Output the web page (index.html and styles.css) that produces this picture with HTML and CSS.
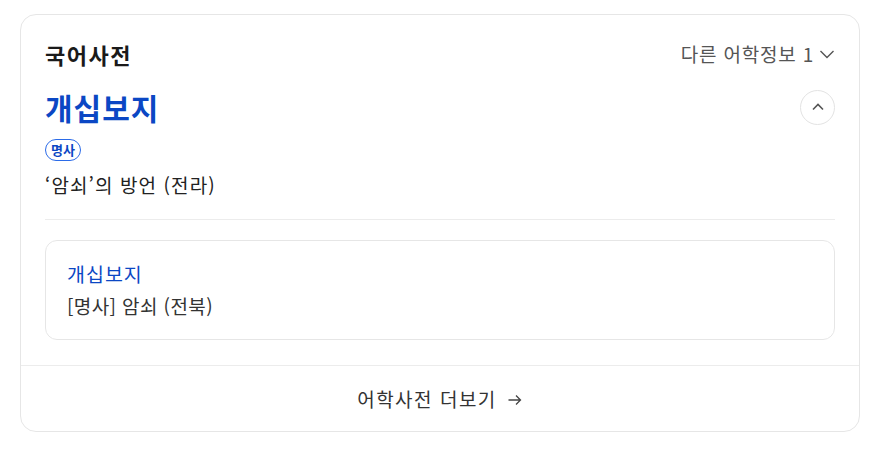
FILE: index.html
```html
<!DOCTYPE html>
<html lang="ko">
<head>
<meta charset="utf-8">
<link rel="stylesheet" href="styles.css">
</head>
<body>
<div class="card">
  <div class="body">
    <div class="head">
      <h2 class="title">국어사전</h2>
      <div class="other">다른 어학정보 1
        <svg class="chev" width="16" height="16" viewBox="0 0 16 16"><path d="M1.5 5l6.5 6.5 6.5-6.5" fill="none" stroke="#555" stroke-width="1.4"/></svg>
      </div>
    </div>
    <div class="wordrow">
      <h1 class="word">개십보지</h1>
      <button class="up"><svg width="14" height="14" viewBox="0 0 14 14"><path d="M2 9.5l5-5 5 5" fill="none" stroke="#555" stroke-width="1.6"/></svg></button>
    </div>
    <div class="pos"><span class="badge">명사</span></div>
    <p class="def">‘암쇠’의 방언 (전라)</p>
    <hr class="sep">
    <div class="sub">
      <div class="subword">개십보지</div>
      <div class="subdef">[명사] 암쇠 (전북)</div>
    </div>
  </div>
  <div class="foot">어학사전 더보기
    <svg class="arrow" width="16" height="16" viewBox="0 0 16 16"><path d="M1.5 8h12M9 3.5L13.5 8 9 12.5" fill="none" stroke="#444" stroke-width="1.3"/></svg>
  </div>
</div>
</body>
</html>
```
FILE: styles.css
```css
* { box-sizing: border-box; }
body {
  margin: 0;
  padding: 14px 32px 0 20px;
  background: #fff;
  font-family: "Noto Sans CJK KR", "Noto Sans", sans-serif;
  color: #222;
}
.card {
  width: 840px;
  border: 1px solid #e6e6e6;
  border-radius: 16px;
  overflow: hidden;
}
.body { padding: 0 24px 25px 24px; }
.head {
  display: flex;
  justify-content: space-between;
  align-items: center;
  height: 76px;
  padding-top: 1px;
}
.title {
  margin: 0;
  font-size: 22px;
  font-weight: 700;
  color: #1a1a1a;
  letter-spacing: 1.5px;
}
.other {
  display: flex;
  align-items: center;
  gap: 5px;
  font-size: 19px;
  letter-spacing: 0.8px;
  color: #555;
}
.chev { margin-top: 1px; }
.wordrow {
  display: flex;
  justify-content: space-between;
  align-items: center;
  margin-top: -4px;
}
.word {
  margin: 0;
  font-size: 30px;
  font-weight: 700;
  color: #0b47c4;
  line-height: 40px;
  letter-spacing: 1px;
}
.up {
  width: 35px;
  height: 35px;
  border-radius: 50%;
  border: 1px solid #e3e3e3;
  background: #fff;
  display: flex;
  align-items: center;
  justify-content: center;
  padding: 0;
}
.pos {
  display: flex;
  margin-top: 12px;
}
.badge {
  display: block;
  height: 22px;
  border: 1px solid #2b6be8;
  border-radius: 11px;
  color: #0b47c4;
  font-size: 13px;
  font-weight: 700;
  line-height: 20px;
  padding: 0 5px;
}
.def {
  margin: 10px 0 0;
  font-size: 19px;
  letter-spacing: 1.1px;
  line-height: 28px;
  color: #222;
}
.sep {
  border: 0;
  border-top: 1px solid #ececec;
  margin: 20px 0 20px;
}
.sub {
  border: 1px solid #e6e6e6;
  border-radius: 12px;
  padding: 17px 21px 17px;
}
.subword {
  font-size: 19.5px;
  letter-spacing: 1px;
  color: #0b47c4;
  line-height: 32px;
}
.subdef {
  font-size: 19px;
  letter-spacing: 0.4px;
  color: #333;
  line-height: 32px;
}
.foot {
  border-top: 1px solid #ececec;
  height: 66px;
  display: flex;
  align-items: center;
  justify-content: center;
  gap: 10px;
  font-size: 19px;
  letter-spacing: 1.5px;
  color: #333;
}
.arrow { margin-top: 2px; }
```
